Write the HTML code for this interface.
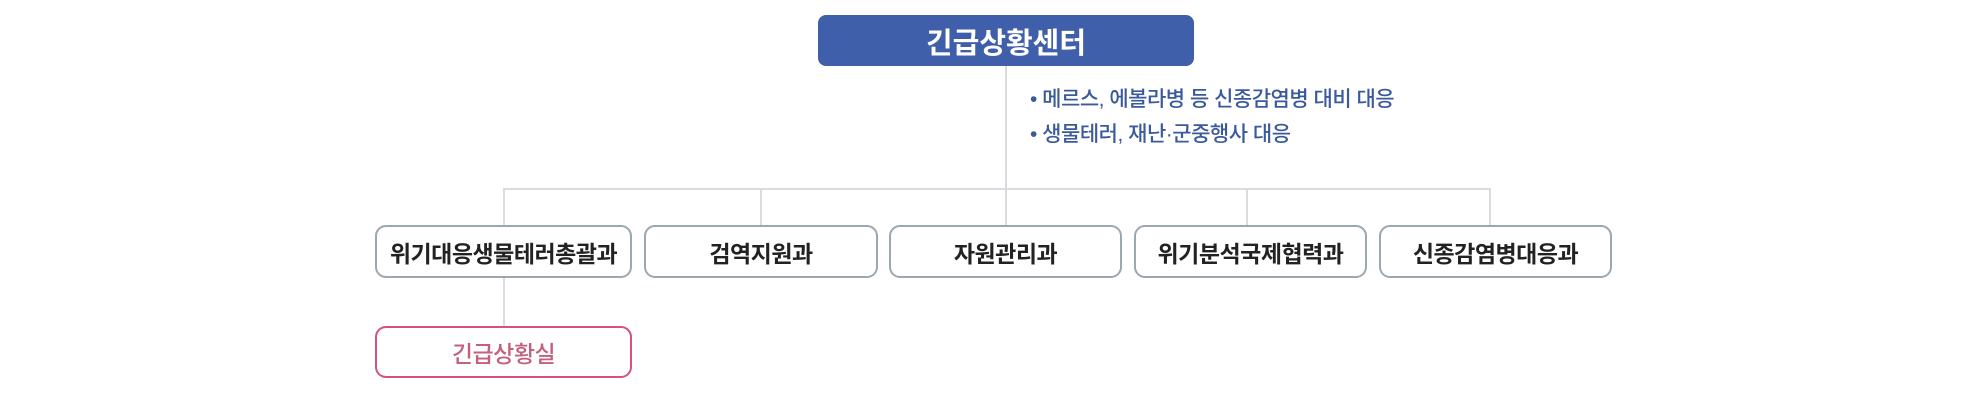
<!DOCTYPE html>
<html><head><meta charset="utf-8"><style>
body{margin:0;width:1961px;height:401px;background:#fff;position:relative;overflow:hidden;font-family:"Liberation Sans","Noto Sans CJK KR",sans-serif}
.l{position:absolute;background:#d8dce0}
.b{position:absolute;box-sizing:border-box;border:2.5px solid #9aa8b0;border-radius:11px;background:#fff;display:flex;align-items:center;justify-content:center;font-size:23px;font-weight:bold;color:#222;letter-spacing:-0.5px}
.top{position:absolute;left:818px;top:15px;width:376px;height:51px;background:#3f5fab;border-radius:8px;color:#fff;font-size:29px;font-weight:bold;display:flex;align-items:center;justify-content:center}
.t{position:absolute;left:1030px;color:#3a5a9c;font-size:21px;font-weight:500;letter-spacing:-0.5px}
</style></head><body>
<div class="l" style="left:1005px;top:66px;width:1.5px;height:124px"></div>
<div class="l" style="left:503px;top:188px;width:987px;height:1.5px"></div>
<div class="l" style="left:503px;top:188px;width:1.5px;height:140px"></div>
<div class="l" style="left:760px;top:188px;width:1.5px;height:38px"></div>
<div class="l" style="left:1005px;top:188px;width:1.5px;height:38px"></div>
<div class="l" style="left:1246px;top:188px;width:1.5px;height:38px"></div>
<div class="l" style="left:1489px;top:188px;width:1.5px;height:38px"></div>
<div class="top">긴급상황센터</div>
<div class="t" style="top:83px">• 메르스, 에볼라병 등 신종감염병 대비 대응</div>
<div class="t" style="top:118px">• 생물테러, 재난·군중행사 대응</div>
<div class="b" style="left:375px;top:225px;width:257px;height:53px">위기대응생물테러총괄과</div>
<div class="b" style="left:644px;top:225px;width:234px;height:53px">검역지원과</div>
<div class="b" style="left:889px;top:225px;width:233px;height:53px">자원관리과</div>
<div class="b" style="left:1134px;top:225px;width:233px;height:53px">위기분석국제협력과</div>
<div class="b" style="left:1379px;top:225px;width:233px;height:53px">신종감염병대응과</div>
<div class="b" style="left:375px;top:326px;width:257px;height:52px;border-color:#d9507a;color:#c3607c;font-weight:500">긴급상황실</div>
</body></html>
